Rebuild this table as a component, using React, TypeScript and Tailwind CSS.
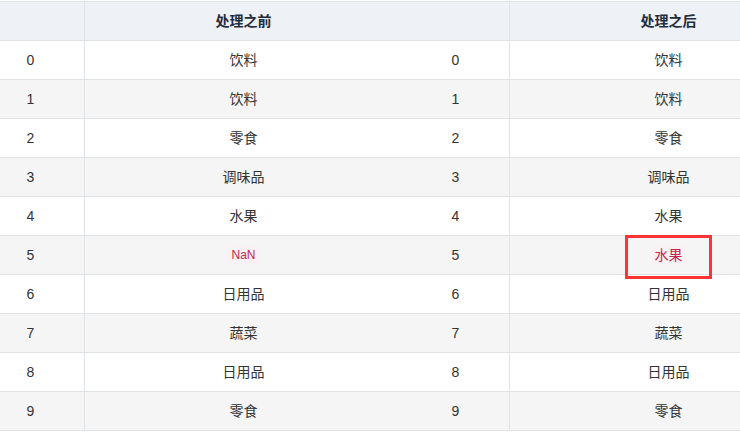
import React from "react";

const before = ["饮料", "饮料", "零食", "调味品", "水果", "NaN", "日用品", "蔬菜", "日用品", "零食"];
const after = ["饮料", "饮料", "零食", "调味品", "水果", "水果", "日用品", "蔬菜", "日用品", "零食"];

function Code({ children }: { children: React.ReactNode }) {
  return (
    <span className="rounded-[3px] bg-[#f9f2f4] px-[4px] py-[2px] text-[#c7254e]">{children}</span>
  );
}

function Table({ title, values, codeIdx, small }: { title: string; values: string[]; codeIdx: number; small: boolean }) {
  return (
    <div className="flex flex-col shrink-0">
      <div className="flex h-[39px] bg-[#eef1f6] border-b border-[#e0e3e6]">
        <div className="w-[108px] shrink-0 border-r border-[#e0e3e6]" />
        <div className="w-[318px] shrink-0 border-r border-[#e0e3e6] flex items-center justify-center font-bold text-[14px] text-[#1f2d3d]">
          {title}
        </div>
      </div>
      {values.map((v, i) => (
        <div
          key={i}
          className={`flex h-[39px] border-b border-[#e0e3e6] ${i % 2 === 1 ? "bg-[#f5f5f5]" : "bg-white"}`}
        >
          <div className="w-[108px] shrink-0 border-r border-[#e0e3e6] flex items-center justify-center text-[14px] text-[#333333]">
            {i}
          </div>
          <div className="w-[318px] shrink-0 border-r border-[#e0e3e6] flex items-center justify-center text-[14px] text-[#333333]">
            {i === codeIdx ? (
              small ? (
                <span className="text-[12px] leading-[16px]"><Code>{v}</Code></span>
              ) : (
                <span className="text-[14px] leading-[16px]"><Code>{v}</Code></span>
              )
            ) : (
              v
            )}
          </div>
        </div>
      ))}
    </div>
  );
}

export default function App() {
  return (
    <div
      className="relative w-[740px] h-[432px] overflow-hidden bg-white pt-px"
      style={{ fontFamily: '"Liberation Sans", "Noto Sans CJK SC", sans-serif' }}
    >
      <div className="flex border-t border-[#e0e3e6] -ml-[23px] w-max">
        <div className="-mr-px">
          <Table title="处理之前" values={before} codeIdx={5} small={true} />
        </div>
        <Table title="处理之后" values={after} codeIdx={5} small={false} />
      </div>
      <div className="absolute left-[625px] top-[235px] w-[87px] h-[44px] border-[3px] border-[#ff3333]" />
    </div>
  );
}
